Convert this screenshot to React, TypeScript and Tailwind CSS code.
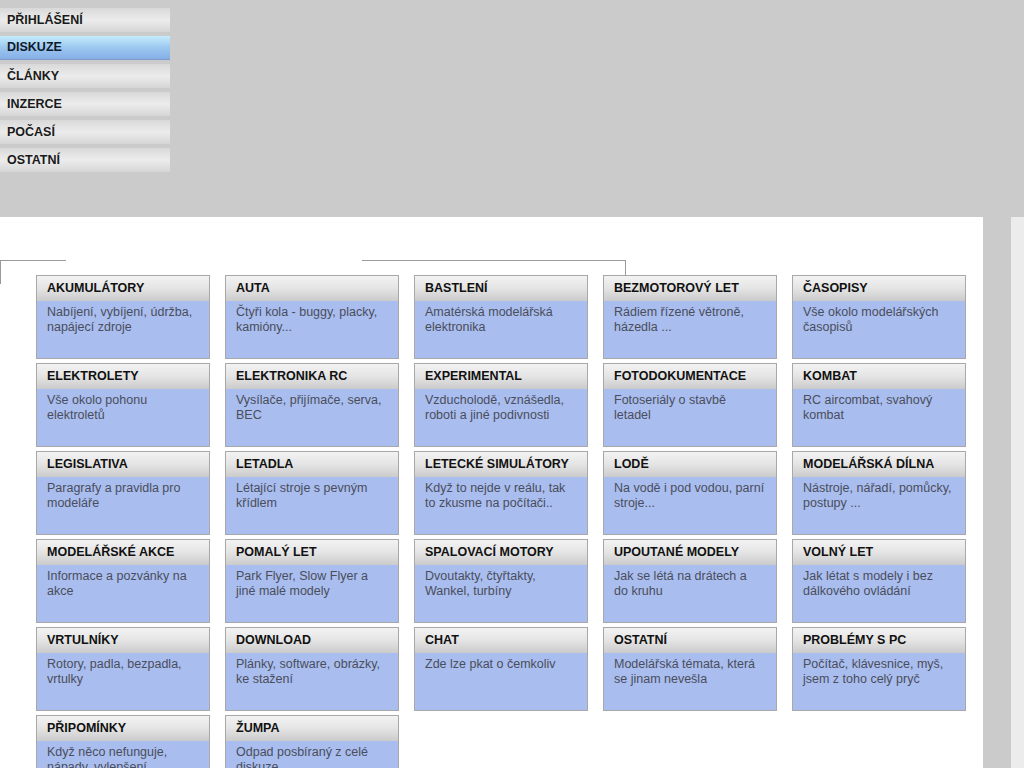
import React from 'react';

const menu = ['PŘIHLÁŠENÍ', 'DISKUZE', 'ČLÁNKY', 'INZERCE', 'POČASÍ', 'OSTATNÍ'];

// line breaks follow the original layout
const forums: [string, string][] = [
  ['AKUMULÁTORY', 'Nabíjení, vybíjení, údržba,\nnapájecí zdroje'],
  ['AUTA', 'Čtyři kola - buggy, placky,\nkamióny...'],
  ['BASTLENÍ', 'Amatérská modelářská\nelektronika'],
  ['BEZMOTOROVÝ LET', 'Rádiem řízené větroně,\nházedla ...'],
  ['ČASOPISY', 'Vše okolo modelářských\nčasopisů'],
  ['ELEKTROLETY', 'Vše okolo pohonu\nelektroletů'],
  ['ELEKTRONIKA RC', 'Vysílače, přijímače, serva,\nBEC'],
  ['EXPERIMENTAL', 'Vzducholodě, vznášedla,\nroboti a jiné podivnosti'],
  ['FOTODOKUMENTACE', 'Fotoseriály o stavbě\nletadel'],
  ['KOMBAT', 'RC aircombat, svahový\nkombat'],
  ['LEGISLATIVA', 'Paragrafy a pravidla pro\nmodeláře'],
  ['LETADLA', 'Létající stroje s pevným\nkřídlem'],
  ['LETECKÉ SIMULÁTORY', 'Když to nejde v reálu, tak\nto zkusme na počítači..'],
  ['LODĚ', 'Na vodě i pod vodou, parní\nstroje...'],
  ['MODELÁŘSKÁ DÍLNA', 'Nástroje, nářadí, pomůcky,\npostupy ...'],
  ['MODELÁŘSKÉ AKCE', 'Informace a pozvánky na\nakce'],
  ['POMALÝ LET', 'Park Flyer, Slow Flyer a\njiné malé modely'],
  ['SPALOVACÍ MOTORY', 'Dvoutakty, čtyřtakty,\nWankel, turbíny'],
  ['UPOUTANÉ MODELY', 'Jak se létá na drátech a\ndo kruhu'],
  ['VOLNÝ LET', 'Jak létat s modely i bez\ndálkového ovládání'],
  ['VRTULNÍKY', 'Rotory, padla, bezpadla,\nvrtulky'],
  ['DOWNLOAD', 'Plánky, software, obrázky,\nke stažení'],
  ['CHAT', 'Zde lze pkat o čemkoliv'],
  ['OSTATNÍ', 'Modelářská témata, která\nse jinam nevešla'],
  ['PROBLÉMY S PC', 'Počítač, klávesnice, myš,\njsem z toho celý pryč'],
  ['PŘIPOMÍNKY', 'Když něco nefunguje,\nnápady, vylepšení...'],
  ['ŽUMPA', 'Odpad posbíraný z celé\ndiskuze'],
];

export default function App() {
  return (
    <div className="h-screen w-[1024px] overflow-hidden bg-[#cbcbcb] font-['Liberation_Sans',Arial,sans-serif] flex flex-col">
      {/* Top menu */}
      <div className="h-[217px] shrink-0 pt-[8px] flex flex-col gap-[4px]">
        {menu.map((item) => {
          const active = item === 'DISKUZE';
          return (
            <div
              key={item}
              className={`w-[170px] h-[24px] flex items-center pl-[7px] text-[12.5px] font-bold ${
                active
                  ? 'bg-gradient-to-b from-[#c4ecfb] via-[#9cc8f0] to-[#86aee6] border-b border-[#7d9ccc] text-[#111a2a]'
                  : 'bg-gradient-to-b from-[#d9d9d9] via-[#ececec] to-[#d6d6d6] text-[#1a1a1a]'
              }`}
            >
              {item}
            </div>
          );
        })}
      </div>

      {/* Forum list */}
      <div className="flex flex-1 min-h-0">
        <div className="relative w-[983px] bg-white pt-[58px] pl-[36px]">
          <div className="absolute left-0 top-[43px] w-[66px] h-px bg-[#9a9a9a]" />
          <div className="absolute left-0 top-[43px] w-px h-[24px] bg-[#9a9a9a]" />
          <div className="absolute left-[362px] top-[43px] w-[264px] h-px bg-[#9a9a9a]" />
          <div className="absolute left-[625px] top-[43px] w-px h-[16px] bg-[#9a9a9a]" />

          <div className="grid grid-cols-[repeat(5,174px)] gap-x-[15px] gap-y-[4px]">
            {forums.map(([title, desc]) => (
              <div key={title} className="h-[84px] border border-[#a8a8a8] bg-[#a9bdee] flex flex-col">
                <div className="h-[25px] shrink-0 flex items-center pl-[10px] bg-gradient-to-b from-[#f3f3f3] via-[#e4e4e4] to-[#cbcbcb] text-[12.5px] font-bold text-[#111]">
                  {title}
                </div>
                <div className="pl-[10px] pr-[2px] pt-[4px] whitespace-pre-line text-[12.5px] leading-[15px] text-[#4a4d5c]">
                  {desc}
                </div>
              </div>
            ))}
          </div>
        </div>
        <div className="w-[28px] bg-[#cbcbcb]" />
        <div className="flex-1 bg-[#ececec]" />
      </div>
    </div>
  );
}
